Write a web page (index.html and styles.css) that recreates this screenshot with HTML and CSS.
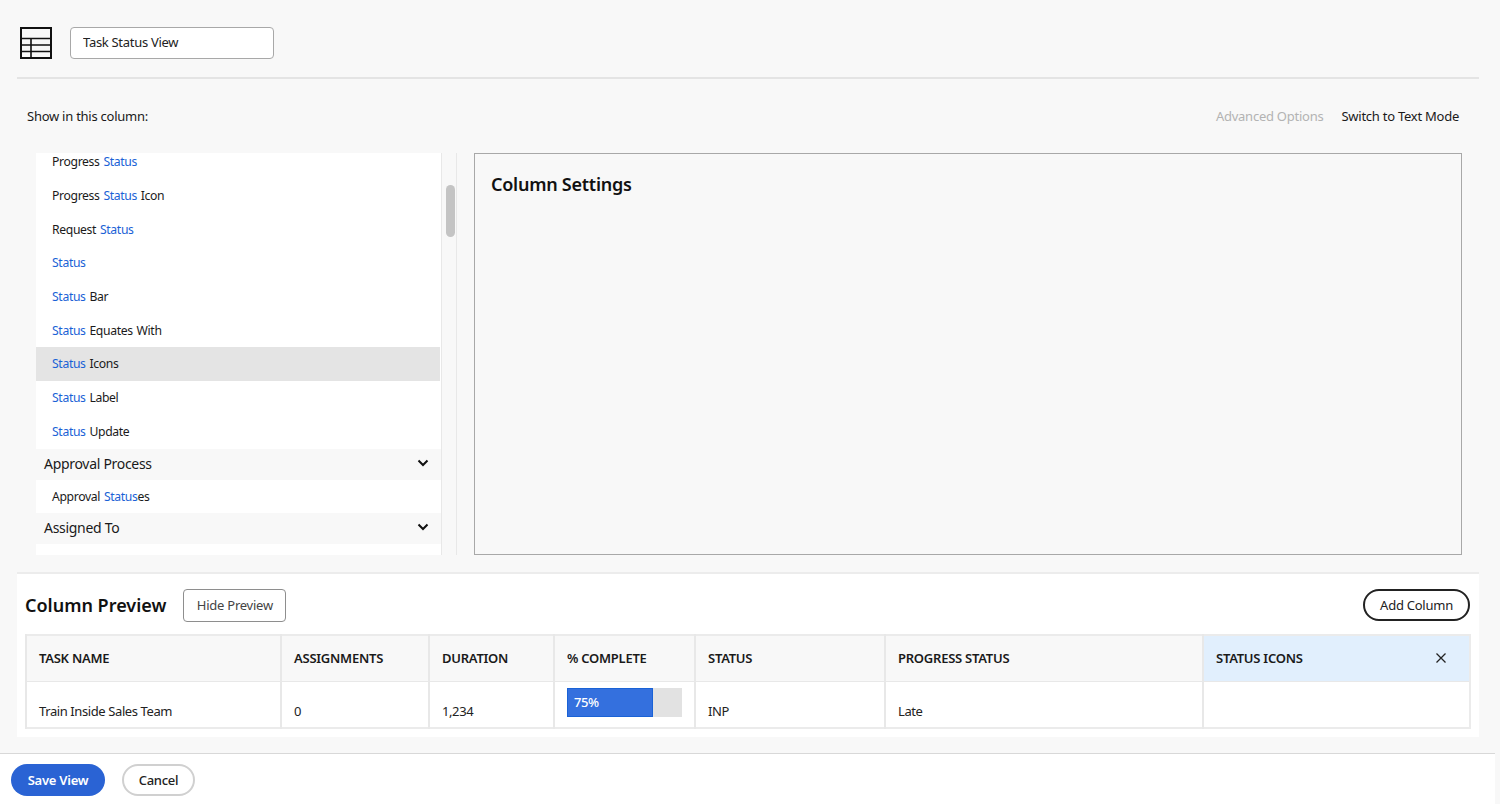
FILE: index.html
```html
<!DOCTYPE html>
<html lang="en">
<head>
  <meta charset="UTF-8">
  <title>Task Status View</title>
  <meta name="viewport" content="width=device-width, initial-scale=1.0">
  <link rel="stylesheet" href="styles.css">
</head>
<body>
  <header class="view-head">
    <svg class="view-icon" width="34" height="34" viewBox="0 0 34 34" fill="none" stroke="#111" stroke-width="1.6">
      <rect x="2" y="2" width="30" height="30" stroke-width="2"/>
      <path d="M2 12.5H32M2 19H32M2 25.5H32M12 12.5V32"/>
    </svg>
    <input class="view-name" type="text" value="Task Status View">
  </header>

  <div class="toolbar">
    <span>Show in this column:</span>
    <span class="toolbar-links">
      <span class="muted">Advanced Options</span>
      <span>Switch to Text Mode</span>
    </span>
  </div>

  <main class="editor">
    <div class="field-list">
      <ul class="fields">
        <li>Progress <b>Status</b></li>
        <li>Progress <b>Status</b> Icon</li>
        <li>Request <b>Status</b></li>
        <li><b>Status</b></li>
        <li><b>Status</b> Bar</li>
        <li><b>Status</b> Equates With</li>
        <li class="selected"><b>Status</b> Icons</li>
        <li><b>Status</b> Label</li>
        <li><b>Status</b> Update</li>
        <li class="group">Approval Process
          <svg width="12" height="8" viewBox="0 0 12 8" fill="none" stroke="#111" stroke-width="2"><path d="M1.5 1.5L6 6L10.5 1.5"/></svg>
        </li>
        <li class="after-group">Approval <b>Status</b>es</li>
        <li class="group">Assigned To
          <svg width="12" height="8" viewBox="0 0 12 8" fill="none" stroke="#111" stroke-width="2"><path d="M1.5 1.5L6 6L10.5 1.5"/></svg>
        </li>
      </ul>
    </div>
    <div class="scroll-track"><div class="scroll-thumb"></div></div>
    <section class="settings">
      <h2>Column Settings</h2>
    </section>
  </main>

  <section class="preview">
    <div class="preview-head">
      <h2>Column Preview</h2>
      <button class="btn-square">Hide Preview</button>
      <button class="btn-add">Add Column</button>
    </div>
    <table class="preview-table">
      <colgroup>
        <col class="c1"><col class="c2"><col class="c3"><col class="c4"><col class="c5"><col class="c6"><col>
      </colgroup>
      <thead>
        <tr>
          <th>TASK NAME</th>
          <th>ASSIGNMENTS</th>
          <th>DURATION</th>
          <th>% COMPLETE</th>
          <th>STATUS</th>
          <th>PROGRESS STATUS</th>
          <th class="active">
            <span class="th-inner">STATUS ICONS
              <svg width="12" height="12" viewBox="0 0 12 12" fill="none" stroke="#222" stroke-width="1.3"><path d="M1.5 1.5L10.5 10.5M10.5 1.5L1.5 10.5"/></svg>
            </span>
          </th>
        </tr>
      </thead>
      <tbody>
        <tr>
          <td>Train Inside Sales Team</td>
          <td>0</td>
          <td>1,234</td>
          <td class="bar-cell">
            <div class="bar"><div class="bar-fill" style="width: 75%">75%</div></div>
          </td>
          <td>INP</td>
          <td>Late</td>
          <td></td>
        </tr>
      </tbody>
    </table>
  </section>

  <footer class="actions">
    <button class="btn-save">Save View</button>
    <button class="btn-cancel">Cancel</button>
  </footer>
</body>
</html>
```

FILE: styles.css
```css
body {
  margin: 0;
  height: 804px;
  overflow: hidden;
  background-color: #f8f8f8;
  color: #1a1a1a;
  font-family: "Noto Sans", Arial, sans-serif;
  font-size: 13px;
  letter-spacing: -0.25px;
}
button {
  font-family: inherit;
  letter-spacing: inherit;
  cursor: pointer;
}
.view-head {
  display: flex;
  align-items: center;
  gap: 17px;
  height: 79px;
  margin: 0 21px 0 17px;
  padding: 8px 0 0 2px;
  box-sizing: border-box;
  border-bottom: 2px solid #e4e4e4;
}
.view-icon {
  flex: none;
}
.view-name {
  width: 204px;
  height: 32px;
  box-sizing: border-box;
  padding: 0 12px 2px;
  border: 1px solid #a8a8a8;
  border-radius: 4px;
  background: #fff;
  color: #222;
  font-family: inherit;
  font-size: 13px;
  letter-spacing: -0.3px;
}
.toolbar {
  display: flex;
  justify-content: space-between;
  align-items: center;
  height: 74px;
  margin: 0 41px 0 27px;
}
.toolbar-links {
  display: flex;
  gap: 18px;
}
.muted {
  color: #b3b3b3;
}
.editor {
  display: flex;
  height: 402px;
  margin-left: 36px;
}
.field-list {
  width: 405px;
  height: 402px;
  overflow: hidden;
  background: #fff;
  border-right: 1px solid #e8e8e8;
}
.fields {
  list-style: none;
  margin: -7.7px 0 0;
  padding: 0;
}
.fields li {
  height: 33.7px;
  line-height: 33.7px;
  padding-left: 16px;
  font-size: 12.2px;
  letter-spacing: -0.35px;
  word-spacing: 1px;
  white-space: nowrap;
}
.fields b {
  color: #1a62d6;
  font-weight: 400;
}
.fields .selected {
  background: #e4e4e4;
  margin-right: 1px;
}
.fields .after-group {
  height: 33px;
  line-height: 33px;
}
.fields .group {
  display: flex;
  justify-content: space-between;
  align-items: center;
  height: 31px;
  box-sizing: border-box;
  line-height: 29px;
  padding: 0 12px 2px 8px;
  background: #f8f8f8;
  font-size: 14px;
  letter-spacing: -0.3px;
  word-spacing: 0;
}
.scroll-track {
  width: 15px;
  height: 402px;
  box-sizing: border-box;
  border-right: 1px solid #e8e8e8;
  padding: 32px 0 0 4px;
}
.scroll-thumb {
  width: 9px;
  height: 52px;
  border-radius: 5px;
  background: #c4c4c4;
}
.settings {
  width: 988px;
  height: 402px;
  box-sizing: border-box;
  margin-left: 17px;
  padding: 18px 16px;
  border: 1px solid #a8a8a8;
}
.settings h2 {
  margin: 0;
  font-size: 18px;
  font-weight: 600;
  line-height: 24px;
  color: #111;
}
.preview {
  width: 1462px;
  height: 165px;
  box-sizing: border-box;
  margin: 17px 0 0 17px;
  padding: 0 8px;
  background: #fff;
  border-top: 2px solid #ececec;
}
.preview-head {
  display: flex;
  align-items: center;
  height: 60px;
  box-sizing: border-box;
  padding-top: 2px;
}
.preview-head h2 {
  margin: 0 17px 0 0;
  font-size: 18px;
  font-weight: 600;
  letter-spacing: 0;
  color: #111;
}
.btn-square {
  width: 103px;
  height: 33px;
  padding: 0;
  border: 1px solid #8e8e8e;
  border-radius: 4px;
  background: #fff;
  color: #444;
  font-size: 13px;
}
.btn-add {
  width: 107px;
  height: 32px;
  margin: 0 1px 0 auto;
  padding: 0;
  border: 2px solid #222;
  border-radius: 16px;
  background: #fff;
  color: #222;
  font-size: 13px;
}
.preview-table {
  width: 1446px;
  table-layout: fixed;
  border-collapse: collapse;
  border: 2px solid #ebebeb;
}
.c1 { width: 255px; }
.c2 { width: 148px; }
.c3 { width: 125px; }
.c4 { width: 141px; }
.c5 { width: 190px; }
.c6 { width: 318px; }
.preview-table th,
.preview-table td {
  box-sizing: border-box;
  padding: 0 12px;
  border: 1px solid #e8e8e8;
  border-left-width: 2px;
  text-align: left;
  color: #222;
  font-size: 13px;
  letter-spacing: -0.4px;
}
.preview-table th {
  height: 46px;
  background: #f8f8f8;
  font-size: 13px;
  font-weight: 600;
  letter-spacing: -0.25px;
  color: #1a1a1a;
}
.preview-table th.active {
  background: #e1effd;
}
.th-inner {
  display: flex;
  justify-content: space-between;
  align-items: center;
  padding-right: 10px;
}
.preview-table td {
  height: 47px;
  vertical-align: bottom;
  padding-bottom: 7px;
}
.preview-table td.bar-cell {
  vertical-align: top;
  padding-top: 6px;
  padding-bottom: 0;
}
.bar {
  width: 115px;
  height: 29px;
  background: #e2e2e2;
}
.bar-fill {
  height: 29px;
  box-sizing: border-box;
  padding-left: 6px;
  border: 1px solid #1a62d6;
  background: #3470de;
  color: #fff;
  font-size: 13px;
  font-weight: 500;
  line-height: 27px;
}
.actions {
  display: flex;
  align-items: center;
  gap: 17px;
  width: 1495px;
  height: 52px;
  box-sizing: border-box;
  margin-top: 16px;
  padding: 1px 0 0 11px;
  background: #fff;
  border-top: 1px solid #d8d8d8;
}
.btn-save,
.btn-cancel {
  height: 32px;
  padding: 0;
  border-radius: 16px;
  font-size: 13px;
}
.btn-save {
  width: 94px;
  border: none;
  background: #2a63d4;
  color: #fff;
  font-weight: 600;
}
.btn-cancel {
  width: 73px;
  border: 2px solid #d0d0d0;
  background: #fff;
  color: #222;
  font-weight: 500;
}
```
